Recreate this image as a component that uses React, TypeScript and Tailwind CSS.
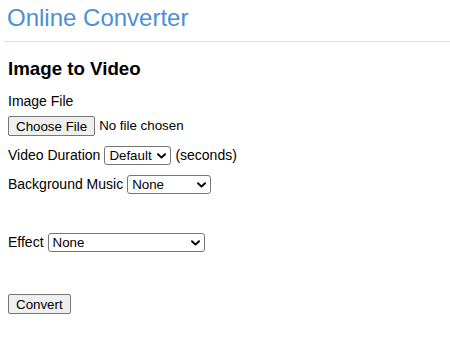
import React from "react";

function Chevron() {
  return (
    <svg
      className="pointer-events-none absolute right-[5px] top-1/2 -translate-y-1/2"
      width="9"
      height="6"
      viewBox="0 0 9 6"
      fill="none"
    >
      <path d="M1 1.2 L4.5 4.6 L8 1.2" stroke="#000" strokeWidth="1.9" strokeLinecap="round" strokeLinejoin="round" />
    </svg>
  );
}

function Select({ width, options }: { width: string; options: string[] }) {
  return (
    <span className={`relative inline-flex ${width} h-[19px]`}>
      <select className="h-full w-full appearance-none rounded-[3px] border border-[#767676] bg-white pl-[4px] pr-[16px] text-[13.33px] leading-[15px] text-black outline-none">
        {options.map((o) => (
          <option key={o}>{o}</option>
        ))}
      </select>
      <Chevron />
    </span>
  );
}

export default function App() {
  return (
    <div
      className="min-h-[341px] w-[450px] bg-white text-black"
      style={{ fontFamily: '"Liberation Sans", Arial, sans-serif' }}
    >
      <div className="pl-[7px] pt-[4px]">
        <h1 className="text-[24px] leading-[28px] font-normal text-[#4a90d9]">Online Converter</h1>
      </div>
      <hr className="ml-[4px] mt-[9px] border-0 border-t border-[#dddddd]" />
      <div className="px-[8px]">
        <h2 className="mt-[16px] text-[18.72px] leading-[22px] font-bold">Image to Video</h2>
        <div className="mt-[13px] text-[14px] leading-[16px]">Image File</div>
        <div className="mt-[7px] flex h-[20px] items-center text-[14px]">
          <button className="h-[20px] rounded-[2px] border border-[#767676] bg-[#efefef] px-[7px] text-[13.33px] leading-[15px] text-black">
            Choose File
          </button>
          <span className="ml-[4px] text-[13.33px]">No file chosen</span>
        </div>
        <div className="mt-[10px] flex h-[19px] items-center text-[14px]">
          <span>Video Duration</span>
          <span className="ml-[4px] inline-flex">
            <Select width="w-[67px]" options={["Default", "5", "10", "15", "30"]} />
          </span>
          <span className="ml-[4px]">(seconds)</span>
        </div>
        <div className="mt-[10px] flex h-[19px] items-center text-[14px]">
          <span>Background Music</span>
          <span className="ml-[4px] inline-flex">
            <Select width="w-[84px]" options={["None", "Upbeat", "Calm"]} />
          </span>
        </div>
        <div className="mt-[39px] flex h-[19px] items-center text-[14px]">
          <span>Effect</span>
          <span className="ml-[4px] inline-flex">
            <Select width="w-[157px]" options={["None", "Fade In / Fade Out", "Zoom"]} />
          </span>
        </div>
        <div className="mt-[42px] flex">
          <button className="h-[20px] rounded-[2px] border border-[#767676] bg-[#efefef] px-[7px] text-[13.33px] leading-[15px] text-black">
            Convert
          </button>
        </div>
      </div>
    </div>
  );
}
